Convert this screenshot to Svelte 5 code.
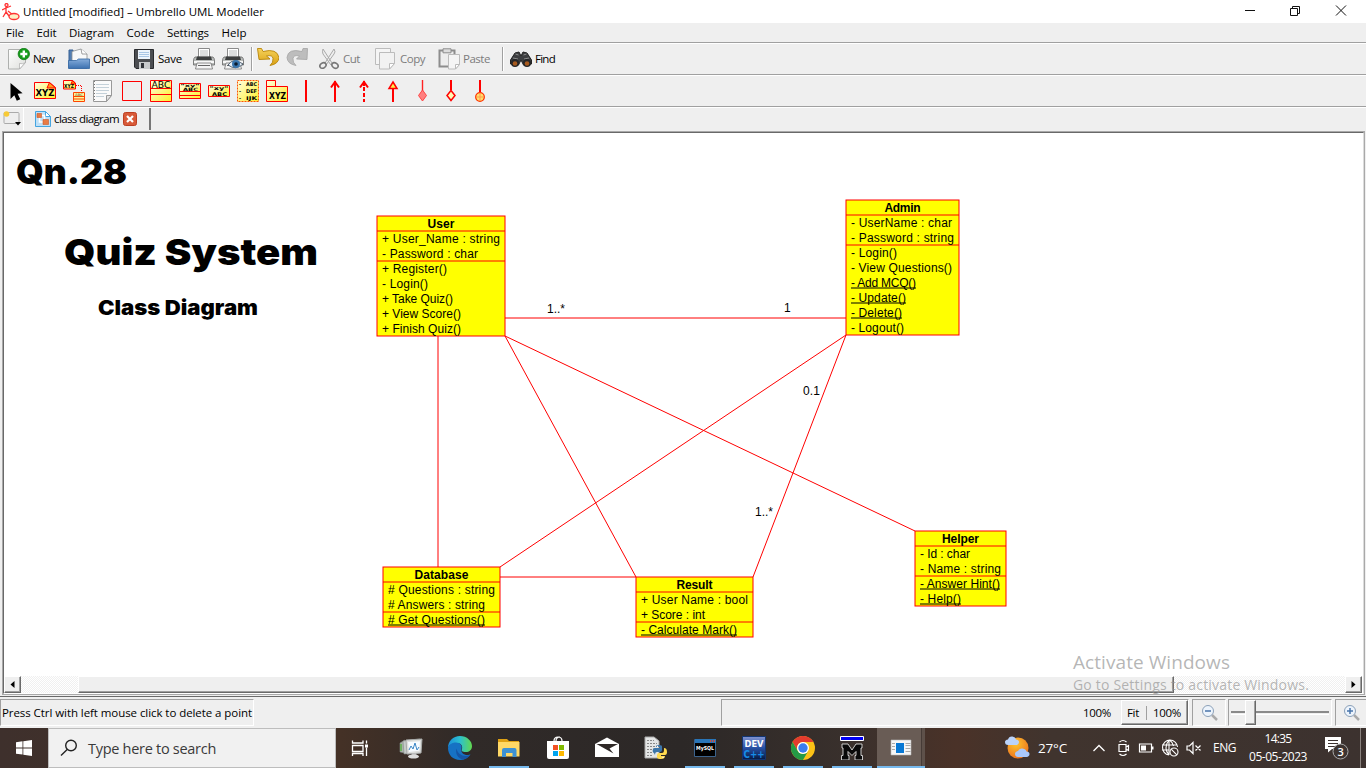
<script>
  // Stretches a label's tracking so that it takes exactly the given width.
  function fit(node, width) {
    const range = document.createRange();
    range.selectNodeContents(node);
    const natural = range.getBoundingClientRect().width;
    const n = node.textContent.length;
    node.style.letterSpacing = (width - natural) / n + 'px';
  }

  const menus = [['File', 18], ['Edit', 20], ['Diagram', 45], ['Code', 28], ['Settings', 42], ['Help', 25]];

  const classes = [
    { name: 'User', nw: 27, x: 377, y: 216, w: 128,
      attrs: [['+ User_Name : string', 118], ['- Password : char', 96]],
      ops: [['+ Register()', 65], ['- Login()', 46], ['+ Take Quiz()', 71], ['+ View Score()', 79], ['+ Finish Quiz()', 79]] },
    { name: 'Admin', nw: 36, x: 846, y: 200, w: 113,
      attrs: [['- UserName : char', 101], ['- Password : string', 103]],
      ops: [['- Login()', 46], ['- View Questions()', 101], ['- Add MCQ()', 65, 1], ['- Update()', 55, 1], ['- Delete()', 51, 1], ['- Logout()', 53]] },
    { name: 'Database', nw: 54, x: 383, y: 567, w: 117,
      attrs: [['# Questions : string', 107], ['# Answers : string', 97]],
      ops: [['# Get Questions()', 97, 1]] },
    { name: 'Result', nw: 36, x: 636, y: 577, w: 117,
      attrs: [['+ User Name : bool', 107], ['+ Score : int', 64]],
      ops: [['- Calculate Mark()', 96, 1]] },
    { name: 'Helper', nw: 37, x: 915, y: 531, w: 91,
      attrs: [['- Id : char', 50], ['- Name : string', 81]],
      ops: [['- Answer Hint()', 80, 1], ['- Help()', 41, 1]] }
  ];

  const links = [
    [505, 318, 846, 318], [438, 336, 438, 567], [505, 336, 636, 577],
    [505, 336, 915, 531], [846, 335, 500, 567], [846, 335, 753, 577], [500, 577, 636, 577]
  ];
  const ends = [['1..*', 547, 313, 18], ['1', 784, 312, 7], ['0.1', 803, 395, 17], ['1..*', 755, 516, 18]];
</script>

<svg class="defs" width="0" height="0">
  <defs>
    <linearGradient id="yel" x1="0" y1="0" x2="1" y2="1"><stop offset="0" stop-color="#fffde0" /><stop offset="1" stop-color="#fff02a" /></linearGradient>
    <linearGradient id="blue" x1="0" y1="0" x2="0" y2="1"><stop offset="0" stop-color="#86addb" /><stop offset="1" stop-color="#3c71b0" /></linearGradient>
    <linearGradient id="page" x1="0" y1="0" x2="1" y2="1"><stop offset="0" stop-color="#fff" /><stop offset="1" stop-color="#dedfdc" /></linearGradient>
    <linearGradient id="gold" x1="0" y1="0" x2="0" y2="1"><stop offset="0" stop-color="#f6d25b" /><stop offset="1" stop-color="#d9a012" /></linearGradient>
    <linearGradient id="edge" x1="0" y1="0" x2="1" y2="0"><stop offset="0" stop-color="#1b8edb" /><stop offset=".5" stop-color="#2cc0cf" /><stop offset="1" stop-color="#62d84f" /></linearGradient>
    <linearGradient id="dev" x1="0" y1="0" x2="0" y2="1"><stop offset="0" stop-color="#8294d0" /><stop offset=".5" stop-color="#2750a4" /><stop offset="1" stop-color="#061a42" /></linearGradient>
    <radialGradient id="sun" cx=".4" cy=".3" r=".8"><stop offset="0" stop-color="#ffc52e" /><stop offset="1" stop-color="#e96a1c" /></radialGradient>
  </defs>
</svg>

{#snippet printer()}
  <path d="M5.500.500h11v9h-11z" fill="#fff" stroke="#8a8a8a" />
  <path d="M7 3h8M7 5h8M7 7h8" stroke="#b9bcbc" />
  <path d="M2 9h18q1.500 1 1.500 4v4h-21v-4Q.5 10 2 9z" fill="#b9bcba" stroke="#666" stroke-width=".8" />
  <path d="M4 8.500h14l1 3.500H3z" fill="#3c3e3e" /><path d="M1 13h20v2H1z" fill="#f7f7f7" />
  <path d="M4 15h14l1.500 6h-17z" fill="#f4f4f4" stroke="#727272" stroke-width=".8" /><path d="M5 17.500h12" stroke="#666" />
{/snippet}

<div class="app">
  <header class="title">
    <svg width="18" height="18" viewBox="0 0 18 18" fill="none" stroke="#f33" stroke-width="1.300"><circle cx="4.500" cy="2" r="1.500" /><path d="M4 4L4 9L1 14M4 9L7 13M0 7L4 5L9 3M6 8l5 4" /><ellipse cx="12" cy="13.500" rx="5" ry="3" fill="#fdf0c5" /></svg>
    <span use:fit={241}>Untitled [modified] – Umbrello UML Modeller</span>
    <svg class="winbtns" width="104" height="12" viewBox="0 0 104 12" fill="none" stroke="#111"><path d="M1 6.500h10" /><path d="M46.500 4.500h7v7h-7zM48.500 4.500v-2h7v7h-2" /><path d="M92 1.500l10 10M102 1.500l-10 10" /></svg>
  </header>
  <nav class="menu">
    {#each menus as [m, w]}<span style:width="{w}px" use:fit={w}>{m}</span>{/each}
  </nav>

  <div class="bar main">
    <div class="tool" style:width="60px">
      <svg width="22" height="22" viewBox="0 0 22 22"><path d="M.5 1.500h17v13l-6 6.500H.5z" fill="url(#page)" stroke="#aeb0ae" /><path d="M17.500 14.500l-6 6.500v-5.500q3 1 6-1z" fill="#fff" stroke="#aaa" stroke-width=".7" /><circle cx="15.800" cy="6" r="5.700" fill="#159b1a" stroke="#08720c" stroke-width=".7" /><path d="M15.800 2.500v7M12.300 6h7" stroke="#fff" stroke-width="2.400" /></svg>
      <span use:fit={21}>New</span>
    </div>
    <div class="tool" style:width="66px">
      <svg width="22" height="22" viewBox="0 0 22 22"><path d="M1 2h4v10h14v8H1z" fill="#527fb4" stroke="#355f92" /><path d="M4 3.500L13 1l6 5v9H4z" fill="#f8f9f9" stroke="#8c9193" stroke-width=".8" /><path d="M13 1l1 5h5" fill="#fff" stroke="#888" stroke-width=".8" /><path d="M.5 12.500h8l2-1.500h11V20.500H.5z" fill="url(#blue)" stroke="#3467a2" stroke-width=".8" /></svg>
      <span use:fit={26}>Open</span>
    </div>
    <div class="tool save" style:width="59px">
      <svg width="20" height="22" viewBox="0 0 20 22"><path d="M.5 1.500h19v19H2L.5 19z" fill="#4b4d51" stroke="#292b2e" /><path d="M4 2h12v9H4z" fill="#edf4fb" /><path d="M5 4.500h10M5 6.500h10M5 8.500h10" stroke="#aac7e5" /><path d="M5 14h11v7H5z" fill="#c7cacc" /><path d="M7 15h3v5H7z" fill="#303338" /></svg>
      <span use:fit={24}>Save</span>
    </div>
    <div class="tool" style:width="29px"><svg width="22" height="22" viewBox="0 0 22 22">{@render printer()}</svg></div>
    <div class="tool" style:width="29px"><svg width="22" height="22" viewBox="0 0 22 22">{@render printer()}<path d="M6 17q5-8 15-1-7 7-15 1z" fill="#e7f0f8" stroke="#345" stroke-width=".8" /><circle cx="14" cy="16" r="4" fill="#3975ad" /><circle cx="14" cy="16" r="1.800" fill="#0c1c2e" /></svg></div>
    <i class="sep"></i>
    <div class="tool" style:width="29px"><svg width="22" height="22" viewBox="0 0 22 22"><path d="M.5.500l1.500 11 11-.500-3.500-3q6-1.500 6.500 2.500.5 4-3 7 8.500-1.500 9-8Q20 0 6 3.500L4.500.500z" fill="url(#gold)" stroke="#b98508" stroke-width=".9" /></svg></div>
    <div class="tool" style:width="33px"><svg width="22" height="22" viewBox="0 0 22 22"><path d="M21.500.500l-.5 11-10.500-.500 3-3q-6-1.500-6.500 2.500-.5 4 3 7Q1.500 16 1 9.500 2 0 16 3.500l1-3z" fill="#bdbdbd" stroke="#a3a3a3" stroke-width=".8" /></svg></div>
    <div class="tool off cut" style:width="56px">
      <svg width="20" height="22" viewBox="0 0 20 22" fill="none"><path d="M4 1q-1 3 0 5l8 11 1-2zM15 1q2 3 0 5L7 17l-1-2z" fill="#eee" stroke="#a9a9a9" /><ellipse cx="4" cy="17.500" rx="3.300" ry="2.500" stroke="#777" stroke-width="1.600" transform="rotate(-35 4 17.500)" /><ellipse cx="16" cy="17.500" rx="3.300" ry="2.500" stroke="#777" stroke-width="1.600" transform="rotate(35 16 17.500)" /></svg>
      <span use:fit={17}>Cut</span>
    </div>
    <div class="tool off" style:width="63px">
      <svg width="22" height="22" viewBox="0 0 22 22" stroke="#bcbcbc"><path d="M.5.5h15v16H.5z" fill="#f5f5f5" /><path d="M4.500 4.500h15v11l-5 5.500h-10z" fill="#f2f2f2" /><path d="M19.500 15.500h-5V21z" fill="#fff" /></svg>
      <span use:fit={25}>Copy</span>
    </div>
    <div class="tool off" style:width="64px">
      <svg width="22" height="22" viewBox="0 0 22 22"><path d="M1.500 2.500h15v16h-15z" fill="#ededed" stroke="#8d8d8d" stroke-width="2" /><path d="M5 .8h8v4H5z" fill="#ddd" stroke="#8c8c8c" /><path d="M10.500 6.500h11v10l-4 4.500h-7z" fill="#f5f5f5" stroke="#bcbcbc" /><path d="M21.500 16.500h-4V21z" fill="#fff" stroke="#bbb" /></svg>
      <span use:fit={27}>Paste</span>
    </div>
    <i class="sep"></i>
    <div class="tool" style:width="60px">
      <svg width="22" height="22" viewBox="0 0 22 22"><path d="M5 5l4-1 2 4 2-4 4 1 4.500 7v4l-8 1-2.500-5-2.500 5-8-1v-4z" fill="#3d3e40" stroke="#222" /><path d="M5.500 6l3 1M16.500 6l-3 1M3 10l5 1M19 10l-5 1" stroke="#8c8d8d" /><circle cx="5" cy="15" r="4" fill="#252628" /><circle cx="17" cy="15" r="4" fill="#252628" /><circle cx="5" cy="15.500" r="2.300" fill="#a75a1f" /><circle cx="17" cy="15.500" r="2.300" fill="#a75a1f" /></svg>
      <span use:fit={20}>Find</span>
    </div>
  </div>

  <div class="bar uml">
    <svg viewBox="0 0 22 22"><path d="M5.500 3v16l3.800-3.800 2.500 5.600 3.500-1.600-2.700-5.400 5-.5z" fill="#000" /></svg>
    <svg viewBox="0 0 22 22"><path d="M.5 2.500h15l6 5v11H.5z" fill="url(#yel)" stroke="red" /><path d="M15.500 2.500L13 8h8.500z" fill="#ff9d1d" stroke="red" /><text x="1.500" y="16" font-size="9" textLength="19" lengthAdjust="spacingAndGlyphs">XYZ</text></svg>
    <svg viewBox="0 0 22 22"><path d="M.5.500h9l3 2.500v6H.5z" fill="url(#yel)" stroke="red" /><path d="M9.500.500L8 4h5z" fill="#f80" stroke="red" /><text x="1" y="7.500" font-size="5.500" textLength="10" lengthAdjust="spacingAndGlyphs">XYZ</text><path d="M13 5.500h5.500V12" fill="none" stroke="red" stroke-dasharray="1 1" /><path d="M10.500 12.500h11v9h-11zM10.500 16.500h11M10.500 19h11" fill="#fff59a" stroke="#f40" /><text class="lite" x="12" y="16" font-size="3.500" textLength="8" lengthAdjust="spacingAndGlyphs" fill="#543">ABC</text></svg>
    <svg viewBox="0 0 22 22"><path d="M1.500.500h18v15l-5 6h-13z" fill="#fafafa" stroke="#999" /><path d="M4 4.500h13M4 7.500h13M4 10.500h13M4 13.500h11M4 16.500h8" stroke="#c4d1d9" /><path d="M2.500 1v20" stroke="#777" stroke-dasharray="1 2" /><path d="M19.500 15.500l-5 6v-6z" fill="#e4e4e4" stroke="#999" /></svg>
    <svg viewBox="0 0 22 22"><path d="M1.500 1.500h19v19h-19z" fill="none" stroke="red" /></svg>
    <svg viewBox="0 0 22 22"><path d="M.5.500h21v21H.5zM.5 8.500h21M.5 14.500h21" fill="url(#yel)" stroke="red" /><text class="lite" x="1.500" y="7.500" font-size="8" textLength="19" lengthAdjust="spacingAndGlyphs">ABC</text></svg>
    <svg viewBox="0 0 22 22"><path d="M.5 3.500h21v15H.5zM.5 11.500h21M.5 15.500h21" fill="url(#yel)" stroke="red" /><text x="1.500" y="6.800" font-size="4" textLength="19" lengthAdjust="spacingAndGlyphs">"xy"</text><text x="4" y="11" font-size="4.500" textLength="15" lengthAdjust="spacingAndGlyphs">ABC</text></svg>
    <svg viewBox="0 0 22 22"><path d="M.5 5.500h21v11H.5z" fill="url(#yel)" stroke="red" /><text x="1.500" y="9.800" font-size="5" textLength="19" lengthAdjust="spacingAndGlyphs">"xy"</text><text x="4" y="15.500" font-size="5" textLength="15" lengthAdjust="spacingAndGlyphs">ABC</text></svg>
    <svg viewBox="0 0 22 22"><path d="M.5.500h21v21H.5z" fill="url(#yel)" stroke="#f50" stroke-dasharray="2 1" /><g font-size="5"><text x="2" y="6">-</text><text x="9" y="6" textLength="11" lengthAdjust="spacingAndGlyphs">ABC</text><text x="2" y="13">-</text><text x="9" y="13" textLength="11" lengthAdjust="spacingAndGlyphs">DEF</text><text x="2" y="20">-</text><text x="9" y="20" textLength="11" lengthAdjust="spacingAndGlyphs">IJK</text></g></svg>
    <svg viewBox="0 0 22 22"><path d="M.5.500h9v6H.5zM.5 6.500h21v15H.5z" fill="url(#yel)" stroke="red" /><text x="3" y="19" font-size="8.500" textLength="17" lengthAdjust="spacingAndGlyphs">XYZ</text></svg>
    <svg viewBox="0 0 22 22"><path d="M11 0v22" stroke="red" stroke-width="2" /></svg>
    <svg viewBox="0 0 22 22" fill="none" stroke="red" stroke-width="2"><path d="M11 1v21M7 7.500L11 2l4 5.500" /></svg>
    <svg viewBox="0 0 22 22" fill="none" stroke="red" stroke-width="2"><path d="M11 7v15" stroke-dasharray="4 2" /><path d="M7 7.500L11 2l4 5.500M11 1v5" /></svg>
    <svg viewBox="0 0 22 22"><path d="M11 8v14" stroke="red" stroke-width="2" /><path d="M11 2l4 6.500H7z" fill="#fff04d" stroke="red" stroke-width="1.500" /></svg>
    <svg viewBox="0 0 22 22"><path d="M11.500 0v11" stroke="#f22" stroke-width="1.400" /><path d="M11.500 10l4 5.500-4 5.500-4-5.500z" fill="#ff8080" stroke="#f44" /></svg>
    <svg viewBox="0 0 22 22"><path d="M11 0v10" stroke="red" stroke-width="2" /><path d="M11 10.500l4 5-4 5-4-5z" fill="#fff9b5" stroke="red" stroke-width="1.500" /></svg>
    <svg viewBox="0 0 22 22"><path d="M11 0v12" stroke="red" stroke-width="2" /><circle cx="11" cy="17" r="4.300" fill="#ffe06b" stroke="#f30" stroke-width="1.300" /><path d="M11 13v8M7 17h8" stroke="#ff9b50" /></svg>
  </div>

  <div class="tabs">
    <svg width="20" height="18" viewBox="0 0 20 18"><path d="M2 2.500h13q1 0 1 1v9q0 1-1 1H2q-1 0-1-1v-9q0-1 1-1z" fill="#eee" stroke="#aaa" /><circle cx="3.500" cy="4" r="2.800" fill="#f7ca36" /><path d="M12 12h6l-3 3.500z" /></svg>
    <div class="tab">
      <svg width="16" height="16" viewBox="0 0 16 16"><path d="M.5.500h10l5 5v10H.5z" fill="#bfe0f7" stroke="#45a5e0" /><path d="M10.500.500l5 5h-5z" fill="#fff" stroke="#45a5e0" /><path d="M6.500 4.500h3v5M4.500 6v5H9" fill="none" stroke="#fff" stroke-width="1.500" /><path d="M2 2.500h4.500v4H2zM8 8.500h5.500v5H8z" fill="#e87b45" stroke="#ca592a" stroke-width=".6" /></svg>
      <span use:fit={65}>class diagram</span>
      <svg width="14" height="14" viewBox="0 0 14 14"><rect x=".5" y=".5" width="13" height="13" rx="2" fill="#d85a38" stroke="#bd3f22" /><path d="M4 4l6 6M10 4l-6 6" stroke="#fff" stroke-width="2.200" /></svg>
    </div>
  </div>

  <main class="frame">
    <svg class="canvas" width="1359" height="543" viewBox="4 133 1359 543">
      <g class="heading">
        <text class="h1" x="16" y="184" textLength="111" lengthAdjust="spacingAndGlyphs">Qn.28</text>
        <text class="h2" x="64" y="265" textLength="254" lengthAdjust="spacingAndGlyphs">Quiz System</text>
        <text class="h3" x="98" y="315" textLength="160" lengthAdjust="spacingAndGlyphs">Class Diagram</text>
      </g>
      <g stroke="red">{#each links as [x1, y1, x2, y2]}<line {x1} {y1} {x2} {y2} />{/each}</g>
      {#each ends as [t, x, y, w]}<text {x} {y} textLength={w}>{t}</text>{/each}
      {#each classes as c}
        {@const rows = [...c.attrs, ...c.ops]}
        <rect x={c.x} y={c.y} width={c.w} height={15 * (rows.length + 1)} fill="#ff0" stroke="red" />
        <path d="M{c.x} {c.y + 15}h{c.w}M{c.x} {c.y + 15 + 15 * c.attrs.length}h{c.w}" stroke="red" />
        <text class="name" x={c.x + c.w / 2 - c.nw / 2} y={c.y + 12} textLength={c.nw}>{c.name}</text>
        {#each rows as [t, w, st], i}
          <text x={c.x + 5} y={c.y + 27 + i * 15} textLength={w}>{t}</text>
          {#if st}<path d="M{c.x + 5} {c.y + 28 + i * 15}h{w}" stroke="#000" />{/if}
        {/each}
      {/each}
    </svg>
    <div class="scroll">
      <div class="arrow"><svg width="5" height="8" viewBox="0 0 5 8"><path d="M4.500 0v7L.5 3.500z" /></svg></div>
      <div class="thumb"></div>
      <div class="arrow"><svg width="5" height="8" viewBox="0 0 5 8"><path d="M.5 0v7l4-3.500z" /></svg></div>
    </div>
  </main>

  <footer class="status">
    <div class="cell hint"><span use:fit={250}>Press Ctrl with left mouse click to delete a point</span></div>
    <div class="cell zoom">
      <span class="pct" use:fit={28}>100%</span>
      <div class="fitbtns"><span class="f" use:fit={12}>Fit</span><span use:fit={28}>100%</span></div>
    </div>
    <div class="cell mag"><svg width="18" height="18" viewBox="0 0 18 18"><path d="M11 11l5 5" stroke="#aaa" stroke-width="2.500" /><circle cx="7" cy="7" r="5.500" fill="#edf4fc" stroke="#8ba0b8" /><path d="M4 7h6" stroke="#4874aa" stroke-width="1.500" /></svg></div>
    <div class="cell slider"><i class="track"></i><i class="knob"></i></div>
    <div class="cell mag last"><svg width="18" height="18" viewBox="0 0 18 18"><path d="M11 11l5 5" stroke="#aaa" stroke-width="2.500" /><circle cx="7" cy="7" r="5.500" fill="#edf4fc" stroke="#8ba0b8" /><path d="M4 7h6M7 4v6" stroke="#4874aa" stroke-width="1.500" /></svg></div>
  </footer>

  <div class="taskbar">
    <div class="start"><svg width="16" height="16" viewBox="0 0 16 16" fill="#fff"><path d="M0 2.200L6.500 1.300V7.500H0zM7.300 1.200L16 0V7.500H7.300zM0 8.400H6.500V14.600L0 13.700zM7.300 8.400H16V16L7.300 14.800z" /></svg></div>
    <div class="search">
      <svg width="18" height="18" viewBox="0 0 18 18" fill="none" stroke="#222" stroke-width="1.400"><circle cx="11" cy="6.500" r="5.300" /><path d="M7.200 10.500L1 16.500" /></svg>
      <span use:fit={128}>Type here to search</span>
    </div>
    <div class="view"><svg width="18" height="18" viewBox="0 0 18 18" fill="none" stroke="#fff" stroke-width="1.300"><path d="M1.500 1.500v2.500h10.500V1.500M1.500 6.500h10.500v6H1.500zM1.500 17v-2.500h10.500V17M15.500 1.500v3M15.500 8.500V17" /><path d="M14 5.500h3v3h-3z" fill="#fff" stroke="none" /></svg></div>
    <div class="app-i"><svg viewBox="0 0 24 24"><path d="M1 7l5-3v13l-5-1z" fill="#a9b3ab" stroke="#848a88" stroke-width=".6" /><path d="M1 8h2v7H1z" fill="#6db05f" /><path d="M4 5l17-2v14L5 18z" fill="#c5cac8" stroke="#848a88" stroke-width=".6" /><path d="M7 4l16-1-1 14-14 1z" fill="#dedfdd" stroke="#a6a9a8" /><path d="M9 6l12-.7-.7 9.500L10 16z" fill="#f7fbff" /><path d="M10 14l2-4 2 3 2-6 2 7 2-3" fill="none" stroke="#3b86c6" /><path d="M13 17h4l1 3h-6z" fill="#bbb" /><ellipse cx="14.500" cy="20.500" rx="5.500" ry="2" fill="#ddd" /></svg></div>
    <div class="app-i"><svg viewBox="0 0 24 24"><path d="M0 12C0 5 5 0 12 0s12 5 12 10c0 4-3 6-6 6-4 0-5-1-4-3 1-4-2-6-5-6-4 0-8 2-9 5z" fill="url(#edge)" /><path d="M0 12c1-4 5-5.500 8-5.500 4 0 6.500 3 5.500 6-1 4 2 6.500 6 6.500 1 0 2.500-.5 3-.500C20 22 16.500 24 12 24 5 24 0 19 0 12z" fill="#1672c4" /><path d="M8.500 12.500c-1.500 5 1.500 10 6.500 11 3-.5 5.500-2 7-4.500-6 2.500-12 0-13.500-6.500z" fill="#1555a5" /></svg></div>
    <div class="app-i run"><svg viewBox="0 0 24 24"><path d="M1 3h9l2 2h10v4H1z" fill="#dfa114" /><path d="M1 6h21.500v14.500H1z" fill="#ffd866" /><path d="M5 21v-7q0-2 2-2h10.500q2 0 2 2v7h-4v-4H9v4z" fill="#3d91d4" /></svg></div>
    <div class="app-i"><svg viewBox="0 0 24 24"><path d="M8 5q0-4 4-4t4 4M10 5q0-4 4-4" fill="none" stroke="#fff" stroke-width="1.200" /><path d="M1 5h22v16q0 2-2 2H3q-2 0-2-2z" fill="#fff" /><path d="M7 9h5v5H7z" fill="#f25022" /><path d="M13 9h5v5h-5z" fill="#7fba00" /><path d="M7 15h5v5H7z" fill="#00a4ef" /><path d="M13 15h5v5h-5z" fill="#ffb900" /></svg></div>
    <div class="app-i"><svg viewBox="0 0 24 24"><path d="M0 8l12-6.500L24 8v13H0z" fill="#fff" /><path d="M1.500 8h21.500l-8.500 4.500 4 5z" fill="#2e2826" /></svg></div>
    <div class="app-i"><svg viewBox="0 0 24 24"><path d="M1 1h9l5 4v17H1z" fill="#e4e6e6" stroke="#aaa" /><path d="M3 4.500h7M3 7.500h10M3 10.500h8M3 13.500h6M3 16.500h5M3 19.500h5" stroke="#888" stroke-dasharray="2 1" /><path d="M10 17q-2-1-1-4 0-1 2-1h5v-1h-4q-.5-2 3-2t3 2v3q0 2-2 2h-3q-2 0-2 3z" fill="#3c75a8" /><path d="M20 12q3 0 3 4 0 3-2 3h-4v1h4q0 3-4 3t-4-2v-2q0-2 2-2h3q2 0 2-3z" fill="#ffdb4e" /><circle cx="13.500" cy="10.500" r=".7" fill="#fff" /><circle cx="19" cy="21.500" r=".7" fill="#fff" /></svg></div>
    <div class="app-i run"><svg viewBox="0 0 24 24"><path d="M1.500 3.500h21v17h-21z" fill="#000" stroke="#3c638c" /><path d="M2 3h21v4H2z" fill="#2975b8" /><path d="M17 5h5" stroke="#d64b38" stroke-width="2" stroke-dasharray="1 1" /><text x="3" y="13.500" font-size="5.500" fill="#fff" textLength="18" lengthAdjust="spacingAndGlyphs">MySQL</text></svg></div>
    <div class="app-i run"><svg viewBox="0 0 24 24"><path d="M.5.500h23v23H.5z" fill="url(#dev)" stroke="#123571" /><text x="2.500" y="11" font-size="9.500" fill="#fff" textLength="19" lengthAdjust="spacingAndGlyphs">DEV</text><text x="1.500" y="21.500" font-size="10" fill="#168de8" textLength="21" lengthAdjust="spacingAndGlyphs">C++</text></svg></div>
    <div class="app-i run"><svg viewBox="0 0 24 24"><circle cx="12" cy="12" r="12" fill="#fbc116" /><path d="M1.600 6A12 12 0 0 1 22.400 6H12a6 6 0 0 0-5.200 9z" fill="#e33b2e" /><path d="M1.600 6A12 12 0 0 0 12 24l5.200-9A6 6 0 0 1 6.800 15z" fill="#249a46" /><circle cx="12" cy="12" r="6" fill="#fff" /><circle cx="12" cy="12" r="4.700" fill="#3a7ded" /></svg></div>
    <div class="app-i run"><svg viewBox="0 0 24 24"><path d="M.5.500h23v4H.5z" fill="#0000f4" stroke="#fff" /><path d="M2 8h6l4 6 4-6h6v4h-1v7.500h1.500V24h-7.500v-4.500h1v-4L12 19.500l-4-4v4h1V24H1.500v-4.500H3V12H2z" fill="#090909" stroke="#ddd" stroke-width=".9" /></svg></div>
    <div class="app-i run active"><svg viewBox="0 0 24 24"><path d="M2 4h20v15H2z" fill="#f6f6f6" stroke="#bbb" stroke-width=".6" /><path d="M7 7h8v10H7z" fill="#0878d4" /><path d="M3 7.500h3M3 10.500h3M3 13.500h3M16.500 7.500h5M16.500 9.500h5M16.500 12.500h5M16.500 15.500h5" stroke="#aaa" /></svg></div>
    <div class="tray">
      <svg width="26" height="24" viewBox="0 0 26 24"><circle cx="13" cy="12" r="10.500" fill="url(#sun)" /><path d="M3 9q-3 0-3-3 0-2 3-2.500Q4 0 7.500.500q3 .5 3.500 3 3 .5 3 2.500T12 9z" fill="#bad3fa" /><path d="M13 21q-3-.5-3-3t3-3q1-3 4.500-2.500t4 3q3 0 3 2.500t-3 3z" fill="#a9c8fb" /></svg>
      <span class="temp" use:fit={29}>27°C</span>
      <svg width="14" height="10" viewBox="0 0 14 10" fill="none" stroke="#fff" stroke-width="1.300" style:margin-left="25px"><path d="M1.500 8L7 2.500 12.500 8" /></svg>
      <svg width="14" height="18" viewBox="0 0 14 18" fill="none" stroke="#fff" stroke-width="1.200" style:margin-left="11px"><path d="M2 5.500h7v7H2zM9 8l2.500-1.500v5L9 10M2.500 3q3.500-3 7 0M2.500 15q3.500 3 7 0" /></svg>
      <svg width="16" height="10" viewBox="0 0 16 10" style:margin-left="7px"><path d="M1.500 1h12v8h-12z" fill="none" stroke="#fff" stroke-width="1.200" /><path d="M3 2.500h5v5H3zM14 3.500h1.500v3H14z" fill="#fff" /></svg>
      <svg width="18" height="18" viewBox="0 0 18 18" fill="none" stroke="#fff" stroke-width="1.100" style:margin-left="7px"><path d="M8 16A7.500 7.500 0 1 1 16.500 8M8 16Q2 9 8 1M8.500 1q3 2 4 6M1 6h15M1 11h7M8 1v15" /><circle cx="13" cy="13" r="4" /><path d="M10.200 10.200l5.600 5.600" /></svg>
      <svg width="16" height="14" viewBox="0 0 16 14" fill="none" stroke="#fff" stroke-width="1.200" style:margin-left="7px"><path d="M1 5h2.500L7 1.500v11L3.500 9H1zM9.500 4.500l5 5M14.500 4.500l-5 5" /></svg>
      <span class="lang" use:fit={23}>ENG</span>
      <div class="clock"><span use:fit={27}>14:35</span><span use:fit={58}>05-05-2023</span></div>
      <svg width="26" height="26" viewBox="0 0 26 26" style:margin-left="17px"><path d="M1 2h16v12H8l-4 3.500V14H1z" fill="#fff" /><path d="M4 5.500h10M4 8.500h10M4 11.500h7" stroke="#3b322f" /><circle cx="16.500" cy="16.500" r="7.500" fill="#3d3431" stroke="#aaa" /><text class="badge" x="13.500" y="20.500" font-size="11" fill="#fff">3</text></svg>
    </div>
  </div>

  <div class="watermark"><span class="big" use:fit={157}>Activate Windows</span><span class="small" use:fit={236}>Go to Settings to activate Windows.</span></div>
</div>

<style>
  :global(body) { margin: 0; overflow: hidden; }
  .defs { position: absolute; }
  .app { position: relative; width: 1366px; height: 768px; display: flex; flex-direction: column; background: #efefef; font: 11.500px/16px "Open Sans", "Noto Sans", sans-serif; color: #000; white-space: nowrap; overflow: hidden; }
  svg { display: block; flex: none; }
  span { display: block; flex: none; }
  i { display: block; }
  .title { height: 23px; background: #fff; display: flex; align-items: center; padding-left: 2px; gap: 3px; box-sizing: border-box; }
  .winbtns { margin-left: auto; margin-right: 18px; margin-top: -4px; }
  .menu { height: 19px; display: flex; align-items: center; gap: 12.500px; padding-left: 6px; border-bottom: 1px solid #a0a0a0; }
  .bar { height: 30px; border-top: 1px solid #fff; border-bottom: 1px solid #a0a0a0; display: flex; align-items: center; }
  .main { padding-left: 8px; }
  .uml { padding-left: 5px; gap: 7px; }
  .uml svg { width: 22px; height: 22px; }
  .tool { display: flex; align-items: center; gap: 3px; flex: none; }
  .save, .cut { gap: 4px; }
  .off { color: #7c7c7c; }
  .sep { width: 1px; height: 24px; background: #a0a0a0; border-right: 1px solid #fff; margin-right: 4px; flex: none; }
  .sep:last-of-type { margin-right: 6px; }
  svg text { font-family: "DejaVu Sans", sans-serif; font-weight: bold; }
  svg text.lite { font-weight: normal; }
  svg text.badge { font-family: "Open Sans", sans-serif; font-weight: 600; }
  .tabs { height: 22px; display: flex; align-items: center; padding-left: 3px; border-top: 1px solid #fff; }
  .tab { height: 22px; width: 128px; border-right: 2px solid #777; border-left: 1px solid #fff; display: flex; align-items: center; gap: 3px; padding-left: 11px; box-sizing: border-box; }
  .tab span { margin-right: 1px; }
  .frame { height: 560px; width: 1359px; margin-top: 2px; border: 1px solid; border-color: #696969 #dcdcdc #fff #696969; outline: 1px solid #a9a9a9; margin-left: 3px; background: #fff; flex: none; }
  .canvas text { font-family: "Liberation Sans", Arial, sans-serif; font-weight: normal; font-size: 12px; }
  .canvas text.name { font-weight: bold; }
  .canvas .heading text { font-family: Inter, "Liberation Sans", sans-serif; font-weight: 900; }
  .canvas .heading .h1 { font-size: 34px; }
  .canvas .heading .h2 { font-size: 36px; }
  .canvas .heading .h3 { font-size: 20.500px; }
  .scroll { height: 17px; display: flex; width: 1358px; background: repeating-conic-gradient(#f0f0f0 0 25%, #fff 0 50%) 0 0 / 2px 2px; }
  .arrow { width: 17px; box-sizing: border-box; background: #efefef; border: 1px solid; border-color: #fff #696969 #696969 #fff; box-shadow: inset -1px -1px #a0a0a0; display: flex; align-items: center; justify-content: center; }
  .thumb { width: 1096px; box-sizing: border-box; margin: 0 171px 0 57px; background: #efefef; border: 1px solid; border-color: #fff #696969 #696969 #fff; box-shadow: inset -1px -1px #a0a0a0; }
  .status { height: 29px; margin-top: 2px; border-top: 1px solid #696969; padding-top: 2px; display: flex; align-items: flex-start; flex: none; }
  .cell { height: 27px; box-sizing: border-box; border: 1px solid; border-color: #a0a0a0 #fff #fff #a0a0a0; display: flex; align-items: center; flex: none; }
  .hint { width: 254px; padding-left: 1px; }
  .zoom { width: 468px; margin-left: 467px; justify-content: flex-end; }
  .pct { margin-right: 10px; }
  .fitbtns { width: 67px; height: 25px; box-sizing: border-box; border: 1px solid; border-color: #fff #696969 #696969 #fff; box-shadow: inset -1px -1px #a0a0a0; display: flex; align-items: center; padding-left: 5px; gap: 6px; }
  .f { border-right: 1px solid #a0a0a0; padding-right: 7px; line-height: 14px; }
  .mag { width: 34px; margin-left: 3px; padding-left: 8px; }
  .last { width: 32px; padding-left: 7px; }
  .slider { width: 104px; margin-left: 2px; display: grid; align-items: center; }
  .track { grid-area: 1 / 1; height: 1px; margin: 0 2px; border-top: 2px solid #8a8a8a; border-bottom: 1px solid #fff; }
  .knob { grid-area: 1 / 1; width: 11px; height: 25px; box-sizing: border-box; margin-left: 16px; background: #efefef; border: 1px solid; border-color: #fff #696969 #696969 #fff; box-shadow: inset -1px -1px #a0a0a0; }
  .taskbar { height: 40px; margin-top: auto; flex: none; display: flex; align-items: stretch; color: #fff; background: linear-gradient(90deg, #3e302c 0, #443126 25%, #302a28 34%, #2c2827 50%, #39302c 62%, #4a3228 70%, #40342e 77%, #3c322f 100%); }
  .start { width: 48px; display: flex; align-items: center; justify-content: center; }
  .search { width: 288px; box-sizing: border-box; border: 1px solid #bdbdbd; background: #f1f1f1; color: #3a3a3a; display: flex; align-items: center; gap: 10px; padding-left: 11px; font-size: 14.500px; line-height: 18px; }
  .search span { padding-top: 2px; }
  .view { width: 50px; display: flex; align-items: center; padding-left: 15px; box-sizing: border-box; flex: none; }
  .app-i { width: 49px; box-sizing: border-box; padding-left: 13px; display: flex; align-items: center; flex: none; }
  .app-i svg { width: 24px; height: 24px; }
  .run { background: linear-gradient(#76b9ed, #76b9ed) 5px 38px / 40px 2px no-repeat; }
  .active { background: linear-gradient(#76b9ed, #76b9ed) 1px 38px / 48px 2px no-repeat, linear-gradient(90deg, transparent 1px, #695c55 1px 45px, #463b36 45px 46px, #5e514a 46px); }
  .tray { margin-left: 80px; width: 356px; display: flex; align-items: center; box-sizing: border-box; border-right: 1px solid #8a827e; flex: none; font-size: 12px; }
  .temp { margin-left: 7px; font-size: 13.500px; width: 29px; }
  .lang { margin-left: 11px; width: 23px; }
  .clock { margin-left: 13px; width: 58px; display: flex; flex-direction: column; align-items: center; line-height: 18px; }
  .watermark { position: absolute; left: 1073px; top: 650px; color: rgba(150, 150, 150, .7); font-weight: 400; }
  .big { font-size: 19px; line-height: 24px; }
  .small { font-size: 14px; line-height: 22px; }
</style>
